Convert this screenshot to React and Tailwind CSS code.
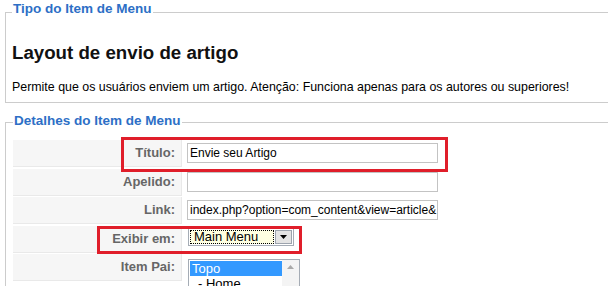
import React from 'react';

const rows = [
  { label: 'Título:', kind: 'input', value: 'Envie seu Artigo' },
  { label: 'Apelido:', kind: 'input', value: '' },
  { label: 'Link:', kind: 'input', value: 'index.php?option=com_content&view=article&' },
  { label: 'Exibir em:', kind: 'select', value: 'Main Menu' },
  { label: 'Item Pai:', kind: 'list', value: 'Topo' },
];

const SelectBox = ({ value }) => (
  <div className="ml-[1px] mt-[2px] flex h-[18px] w-[106px] border border-[#a5acb5] bg-white p-[1px]">
    <div className="flex flex-1 items-center border border-dotted border-black bg-[#ffffe1] pl-[3px] text-[13px] leading-none text-black">
      {value}
    </div>
    <div className="ml-[1px] flex w-[17px] items-center justify-center border border-[#9ca3ad] bg-[#e4e4e4]">
      <svg width="7" height="4" viewBox="0 0 7 4">
        <path d="M0 0h7L3.5 4z" fill="#000" />
      </svg>
    </div>
  </div>
);

const ListBox = ({ value }) => (
  <div className="ml-[1px] mt-[5px] flex h-[60px] w-[112px] border border-[#a5acb5] bg-white">
    <div className="flex-1 pt-[1px] pl-[1px] text-[13px] leading-[15px]">
      <div className="bg-[#3399ff] pl-[2px] text-white">{value}</div>
      <div className="pl-[8px] text-black">- Home</div>
    </div>
    <div className="flex w-[17px] flex-col items-center bg-[#f4f4f4] pt-[5px]">
      <svg width="7" height="4" viewBox="0 0 7 4">
        <path d="M3.5 0L7 4H0z" fill="#a9a9a9" />
      </svg>
    </div>
  </div>
);

export default function App() {
  return (
    <div className="relative h-[286px] w-[615px] overflow-hidden bg-white pt-[1px] font-['Liberation_Sans',Arial,sans-serif] text-black">
      <fieldset className="ml-[5px] mr-[7px] border border-r-0 border-[#cccccc] px-[6px] pb-[7px]">
        <legend className="px-[1px] pb-[6px] text-[13.5px] font-bold leading-[16px] text-[#2d6fc6]">
          Tipo do Item de Menu
        </legend>
        <h2 className="mt-[19px] text-[18.7px] font-bold leading-[22px] text-[#111]">Layout de envio de artigo</h2>
        <p className="mt-[15px] text-[12.4px] leading-[16px]">
          Permite que os usuários enviem um artigo. Atenção: Funciona apenas para os autores ou superiores!
        </p>
      </fieldset>

      <fieldset className="ml-[5px] mr-[7px] mt-[10px] border border-r-0 border-[#cccccc] px-[7px] pb-[10px]">
        <legend className="px-[1px] pb-[3px] text-[13.5px] font-bold leading-[16px] text-[#2d6fc6]">
          Detalhes do Item de Menu
        </legend>
        <div className="mt-[8px] flex flex-col gap-[1.5px]">
          {rows.map((row) => (
            <div key={row.label} className="flex gap-[1px]">
              <div className="flex h-[27px] w-[169px] shrink-0 items-center justify-end border-b border-r border-[#e9e9e9] bg-[#f6f6f6] pr-[6px] text-[13px] font-bold text-[#666666]">
                {row.label}
              </div>
              <div className="flex flex-1 items-start pl-[4px]">
                {row.kind === 'input' && (
                  <div className="mt-[3px] flex h-[20px] w-[251px] items-center overflow-hidden whitespace-nowrap border border-[#c3c3c3] bg-white px-[2px] text-[12px] text-black">
                    {row.value}
                  </div>
                )}
                {row.kind === 'select' && <SelectBox value={row.value} />}
                {row.kind === 'list' && <ListBox value={row.value} />}
              </div>
            </div>
          ))}
        </div>
      </fieldset>

      {/* anotações em vermelho */}
      <div className="absolute left-[121px] top-[137px] h-[35px] w-[327px] border-[3px] border-[#e01e2a]" />
      <div className="absolute left-[97px] top-[226px] h-[28px] w-[205px] border-[3px] border-[#e01e2a]" />
    </div>
  );
}
